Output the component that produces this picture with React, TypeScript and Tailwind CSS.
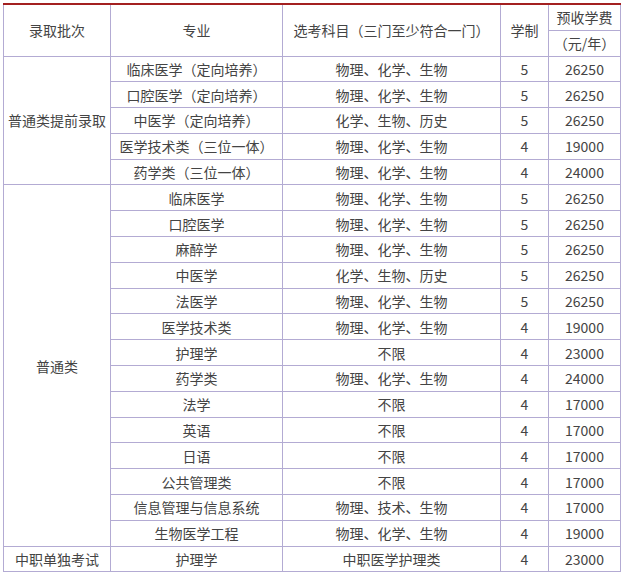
const A = "物理、化学、生物";
const B = "化学、生物、历史";

const rows: [string, string, string, string][] = [
  ["临床医学（定向培养）", A, "5", "26250"],
  ["口腔医学（定向培养）", A, "5", "26250"],
  ["中医学（定向培养）", B, "5", "26250"],
  ["医学技术类（三位一体）", A, "4", "19000"],
  ["药学类（三位一体）", A, "4", "24000"],
  ["临床医学", A, "5", "26250"],
  ["口腔医学", A, "5", "26250"],
  ["麻醉学", A, "5", "26250"],
  ["中医学", B, "5", "26250"],
  ["法医学", A, "5", "26250"],
  ["医学技术类", A, "4", "19000"],
  ["护理学", "不限", "4", "23000"],
  ["药学类", A, "4", "24000"],
  ["法学", "不限", "4", "17000"],
  ["英语", "不限", "4", "17000"],
  ["日语", "不限", "4", "17000"],
  ["公共管理类", "不限", "4", "17000"],
  ["信息管理与信息系统", "物理、技术、生物", "4", "17000"],
  ["生物医学工程", A, "4", "19000"],
  ["护理学", "中职医学护理类", "4", "23000"],
];

const td = "border border-[#b3abd3] text-center px-0 py-0 h-[25.8px] leading-[18px]";

export default function App() {
  return (
    <div className="bg-white w-[625px] h-[581px] pt-[3px] pl-[3px]" style={{ fontFamily: '"Noto Sans CJK SC", sans-serif' }}>
      <table className="border-collapse text-[14px] text-[#444] border-t-2 border-t-[#a32020] table-fixed w-[617px]">
        <colgroup>
          <col className="w-[107px]" />
          <col className="w-[172px]" />
          <col className="w-[218px]" />
          <col className="w-[48px]" />
          <col className="w-[72px]" />
        </colgroup>
        <tbody>
          <tr>
            <td rowSpan={2} className={td}>录取批次</td>
            <td rowSpan={2} className={td}>专业</td>
            <td rowSpan={2} className={td + " whitespace-nowrap"}>选考科目（三门至少符合一门）</td>
            <td rowSpan={2} className={td}>学制</td>
            <td className={td + " h-[26px]"}>预收学费</td>
          </tr>
          <tr>
            <td className={td + " h-[26px]"}>（元/年）</td>
          </tr>
          {rows.map((r, i) => (
            <tr key={i}>
              {i === 0 && <td rowSpan={5} className={td}>普通类提前录取</td>}
              {i === 5 && <td rowSpan={14} className={td}>普通类</td>}
              {i === 19 && <td className={td}>中职单独考试</td>}
              {r.map((c, j) => (
                <td key={j} className={td + " whitespace-nowrap"}>{c}</td>
              ))}
            </tr>
          ))}
        </tbody>
      </table>
    </div>
  );
}
